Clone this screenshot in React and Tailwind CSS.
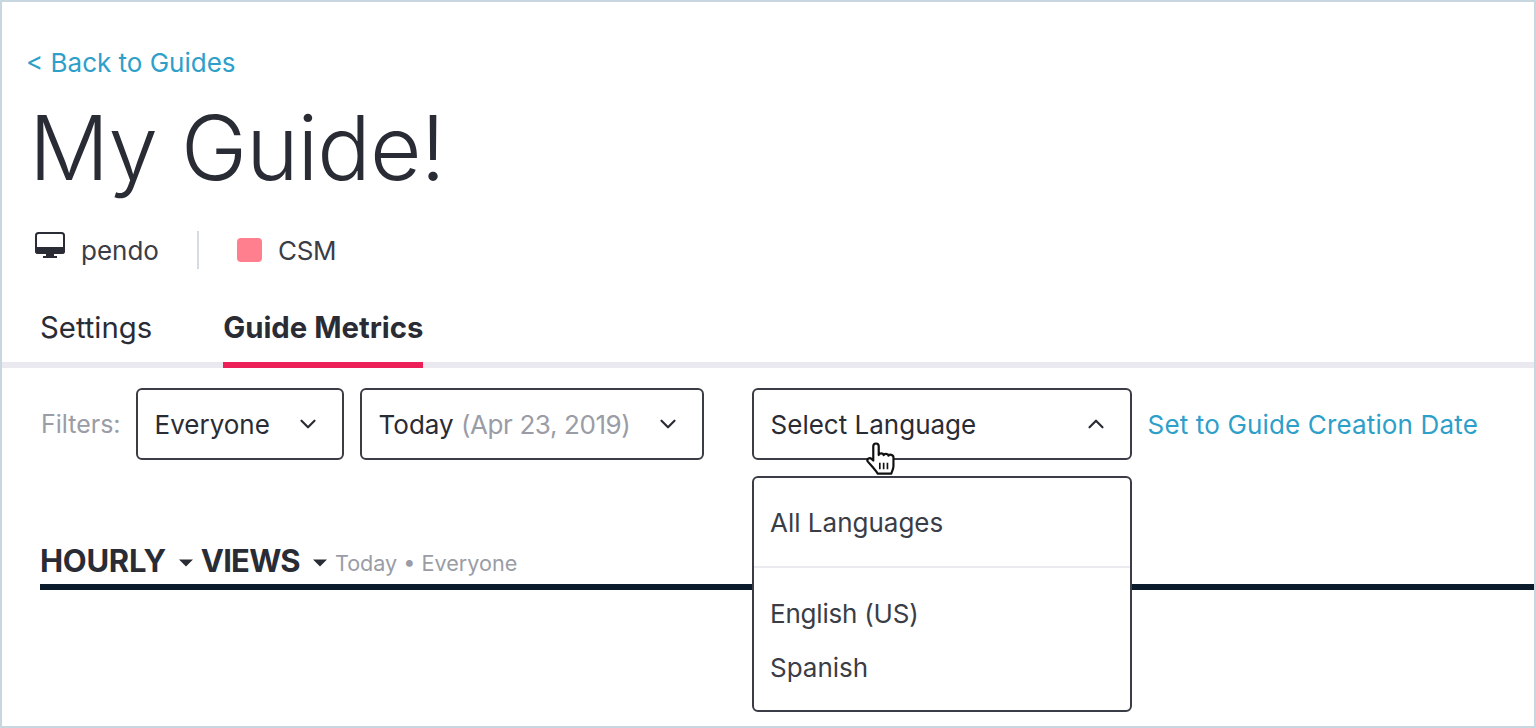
import { ChevronDown, ChevronUp } from "lucide-react";

function Caret() {
  return (
    <svg width="16" height="8" viewBox="0 0 16 8" className="ml-[12px] mr-[7px] mt-[4px]">
      <path d="M1 0.5h14L8 7.5z" fill="#2a2c35" />
    </svg>
  );
}

function FilterButton({ width, children, up }) {
  return (
    <div
      className={`flex h-[72px] items-center justify-between rounded-md border-2 border-[#3a3d46] bg-white pl-[17px] pr-[21px] text-[#2a2c35] ${width}`}
    >
      <span>{children}</span>
      {up ? (
        <ChevronUp size={26} strokeWidth={2} color="#2a2c35" />
      ) : (
        <ChevronDown size={26} strokeWidth={2} color="#2a2c35" />
      )}
    </div>
  );
}

function HandCursor() {
  return (
    <svg
      width="34"
      height="36"
      viewBox="0 0 30 33"
      className="absolute left-[863px] top-[440px]"
    >
      <path
        d="M7 4c0-3.500 5-3.500 5 0v8c.5-2 4-2 4.500 0 .5-1.500 4-1.500 4.500.5.5-1.500 4.500-1 4.500 1.500v8c0 3-1.500 5-2 7H11c-1-2.500-3-4-5-6.500L2 18c-1.500-2 1.500-4.500 3.500-2.500L7 17z"
        fill="#fff"
        stroke="#111"
        strokeWidth="2"
        strokeLinejoin="round"
      />
      <path d="M13 19v6M16.500 19v6M20 19v6" stroke="#111" strokeWidth="1.500" />
    </svg>
  );
}

export default function App() {
  return (
    <div className="relative h-[728px] w-[1536px] overflow-hidden border-2 border-[#c8d6e0] bg-white font-['Inter',sans-serif] text-[26px] text-[#2a2c35]">
      <div className="pl-[24px] pt-[44px] leading-[34px] text-[#2e9fc9]">&lt; Back to Guides</div>
      <h1 className="pl-[27px] pt-[18px] text-[89px] font-light leading-[100px] tracking-[-1px] text-[#2a2c35]">
        My Guide!
      </h1>
      <div className="mt-[28px] flex h-[40px] items-center pl-[33px] pt-[8px] text-[#3a3d46]">
        <svg width="30" height="27" viewBox="0 0 30 27" className="mb-[10px]">
          <rect x="1" y="1" width="28" height="20" rx="2.500" fill="none" stroke="#2a2c35" strokeWidth="2" />
          <path d="M0 15h30v4a3 3 0 0 1-3 3H3a3 3 0 0 1-3-3z" fill="#2a2c35" />
          <path d="M11 21h8v3h3v2H8v-2h3z" fill="#2a2c35" />
        </svg>
        <span className="ml-[16px]">pendo</span>
        <div className="ml-[38px] h-[38px] w-[2px] bg-[#d3dce5]" />
        <div className="ml-[38px] h-[24px] w-[25px] rounded-[4px] bg-[#ff7f8f]" />
        <span className="ml-[16px] tracking-[-0.3px]">CSM</span>
      </div>
      <div className="mt-[34px] flex h-[68px] border-b-[6px] border-[#e9e9ef] pl-[38px] text-[29.300px]">
        <div className="pt-[8px] leading-[40px]">Settings</div>
        <div className="relative ml-[71px] pt-[8px] font-bold leading-[40px]">
          Guide Metrics
          <div className="absolute bottom-[-6px] left-0 h-[6px] w-full bg-[#ec1f59]" />
        </div>
      </div>
      <div className="mt-[20px] flex items-center pl-[39px]">
        <span className="mr-[15px] pt-[2px] text-[25px] text-[#9a9ca6]">Filters:</span>
        <FilterButton width="w-[208px]">Everyone</FilterButton>
        <div className="ml-[16px]">
          <FilterButton width="w-[344px]">
            Today <span className="tracking-[-0.4px] text-[#9a9ca6]">(Apr 23, 2019)</span>
          </FilterButton>
        </div>
        <div className="ml-[48px]">
          <FilterButton width="w-[380px]" up>
            Select Language
          </FilterButton>
        </div>
        <span className="ml-[16px] tracking-[0.15px] text-[#2e9fc9]">Set to Guide Creation Date</span>
      </div>
      <div className="ml-[38px] mt-[78px] flex h-[46px] items-center">
        <span className="text-[31px] font-bold tracking-[-0.3px]">HOURLY</span>
        <Caret />
        <span className="text-[31px] font-bold tracking-tight">VIEWS</span>
        <Caret />
        <span className="mt-[4px] text-[21.600px] text-[#9a9ca6]">Today • Everyone</span>
      </div>
      <div className="ml-[38px] h-[6px] bg-[#0b1b2b]" />

      <div className="absolute left-[750px] top-[474px] h-[236px] w-[380px] rounded-md border-2 border-[#3a3d46] bg-white text-[#3a3d46]">
        <div className="flex h-[90px] items-center border-b-2 border-[#ebebef] pl-[16px] pt-[1px]">
          All Languages
        </div>
        <div className="pl-[16px] pt-[29px] leading-[34px] tracking-[-0.2px]">English (US)</div>
        <div className="pl-[16px] pt-[20px] leading-[34px]">Spanish</div>
      </div>
      <HandCursor />
    </div>
  );
}
